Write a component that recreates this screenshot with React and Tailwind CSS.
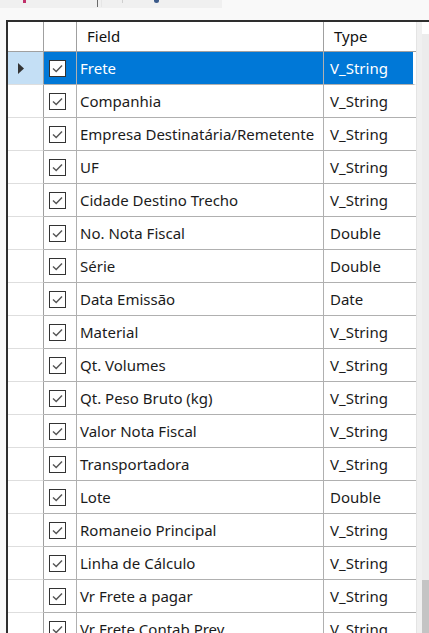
import React from 'react';

const rows = [
  ['Frete', 'V_String'],
  ['Companhia', 'V_String'],
  ['Empresa Destinatária/Remetente', 'V_String'],
  ['UF', 'V_String'],
  ['Cidade Destino Trecho', 'V_String'],
  ['No. Nota Fiscal', 'Double'],
  ['Série', 'Double'],
  ['Data Emissão', 'Date'],
  ['Material', 'V_String'],
  ['Qt. Volumes', 'V_String'],
  ['Qt. Peso Bruto (kg)', 'V_String'],
  ['Valor Nota Fiscal', 'V_String'],
  ['Transportadora', 'V_String'],
  ['Lote', 'Double'],
  ['Romaneio Principal', 'V_String'],
  ['Linha de Cálculo', 'V_String'],
  ['Vr Frete a pagar', 'V_String'],
  ['Vr Frete Contab Prev', 'V_String'],
];

const CheckBox = () => (
  <div className="w-[17px] h-[17px] border-[1.5px] border-[#333] bg-white flex items-center justify-center">
    <svg width="13" height="13" viewBox="0 0 13 13" fill="none">
      <path d="M2 6.5 L5.2 9.6 L11 3.4" stroke="#555" strokeWidth="1.4" />
    </svg>
  </div>
);

const Row = ({ field, type, selected }) => (
  <div className="flex h-[33px] shrink-0">
    {/* row header */}
    <div
      className={`w-[36px] border-r border-r-[#a0a0a0] border-b border-b-[#dedede] flex items-center pl-[10px] ${
        selected ? 'bg-[#c4dff5]' : 'bg-white'
      }`}
    >
      {selected && (
        <svg width="7" height="11" viewBox="0 0 7 11">
          <path d="M0 0 L6 5.5 L0 11 Z" fill="#333" />
        </svg>
      )}
    </div>
    <div
      className={`w-[33px] border-r border-b border-[#b0b0b0] flex items-center pl-[5px] ${
        selected ? 'bg-[#0078d7]' : 'bg-white'
      }`}
    >
      <CheckBox />
    </div>
    <div
      className={`w-[247px] border-r border-b border-[#b0b0b0] flex items-center pl-[3px] ${
        selected ? 'bg-[#0078d7] text-white' : 'bg-white text-[#1b1b1b]'
      }`}
    >
      {field}
    </div>
    <div
      className={`w-[92px] border-b border-[#b0b0b0] flex items-center pl-[6px] ${
        selected ? 'bg-[#0078d7] text-white border-r-[3px] border-r-white' : 'bg-white text-[#1b1b1b]'
      }`}
    >
      {type}
    </div>
  </div>
);

export default function App() {
  return (
    <div
      className="w-[429px] h-[633px] overflow-hidden bg-[#f9f9f9] text-[15px]"
      style={{ fontFamily: '"Noto Sans", "Open Sans", sans-serif' }}
    >
      {/* toolbar remnant */}
      <div className="w-[222px] h-[8px] bg-[#f0f0f0] flex items-start">
        <div className="ml-[23px] w-[3px] h-[3px] bg-[#c0306a]" />
        <div className="ml-[71px] w-px h-[7px] bg-[#6a6a6a]" />
        <div className="ml-[3px] w-px h-[7px] bg-[#e6e6e6]" />
        <div className="ml-[20px] w-px h-[3px] bg-[#cfcfcf]" />
        <div className="ml-[31px] w-[5px] h-[3px] rounded-b-full bg-[#3b5a8a]" />
      </div>
      <div className="h-[12px]" />

      {/* grid */}
      <div className="ml-[6px] flex border-l-2 border-t-2 border-[#2e2e2e] h-[613px] bg-white">
        <div className="flex flex-col">
          {/* header */}
          <div className="flex h-[30px] shrink-0 leading-none">
            <div className="w-[36px] border-r border-b border-[#a0a0a0]" />
            <div className="w-[33px] border-r border-b border-[#a0a0a0]" />
            <div className="w-[247px] border-r border-b border-[#a0a0a0] flex items-center pl-[10px] text-[#111]">
              Field
            </div>
            <div className="w-[92px] border-b border-[#a0a0a0] flex items-center pl-[10px] text-[#111]">
              Type
            </div>
          </div>
          {rows.map(([f, t], i) => (
            <Row key={f} field={f} type={t} selected={i === 0} />
          ))}
        </div>
        {/* cut-off column and scrollbar */}
        <div className="w-[6px] bg-[#f0f0f0] border-l border-[#e4e4e4]" />
        <div className="flex-1 flex flex-col bg-[#ececec]">
          <div className="h-[12px] bg-white" />
          <div className="flex-1" />
          <div className="h-[53px] bg-[#c4c4c4]" />
        </div>
      </div>
    </div>
  );
}
